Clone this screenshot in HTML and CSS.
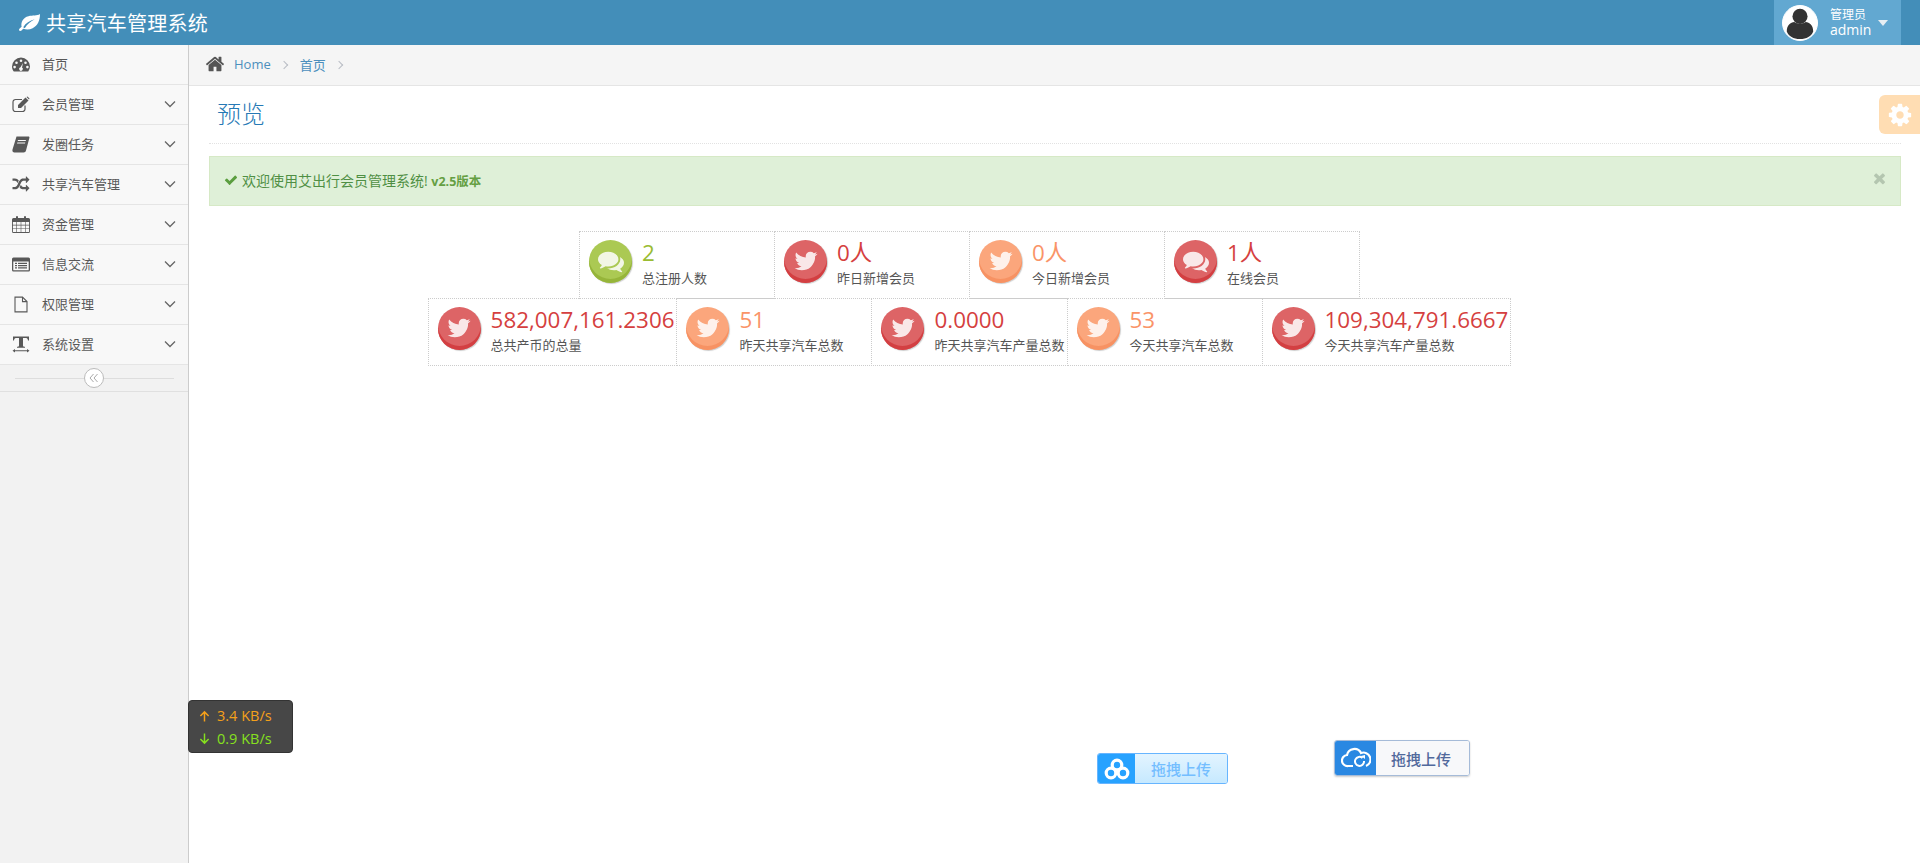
FILE: index.html
```html
<!DOCTYPE html>
<html lang="zh-CN">
<head>
<meta charset="utf-8">
<title>共享汽车管理系统</title>
<link rel="stylesheet" href="styles.css">
</head>
<body>
<svg class="sprites" aria-hidden="true">
  <symbol id="i-twitter" viewBox="0 0 1792 1792"><path d="M1684 408q-67 98-162 167 1 14 1 42 0 130-38 259.500t-115.500 248.500-184.500 210.500-258 146-323 54.500q-271 0-496-145 35 4 78 4 225 0 401-138-105-2-188-64.500t-114-159.500q33 5 61 5 43 0 85-11-112-23-185.500-111.500t-73.500-205.500v-4q68 38 146 41-66-44-105-115t-39-154q0-88 44-163 121 149 294.500 238.500t371.500 99.500q-8-38-8-74 0-134 94.500-228.500t228.500-94.500q140 0 236 102 109-21 200-76-35 109-138 165 90-10 180-49z"/></symbol>
  <symbol id="i-comments" viewBox="0 0 1792 1792"><path d="M1408 768q0 139-94 257t-256.500 186.500-353.500 68.500q-86 0-176-16-124 88-278 128-36 9-86 16h-3q-11 0-20.500-8t-11.500-21q-1-3-1-6.500t.5-6.500 2-6l2.500-5 3.500-5.500 4-5 4.500-5 4-4.500q5-6 23-25t26-29.500 22.500-29 25-38.500 20.500-44q-124-72-195-177t-71-224q0-139 94-257t256.500-186.500 353.500-68.500 353.500 68.500 256.500 186.500 94 257zm384 256q0 120-71 224.500t-195 176.500q10 24 20.500 44t25 38.500 22.500 29 26 29.500 23 25q1 1 4 4.500t4.500 5 4 5 3.500 5.500l2.500 5 2 6 .5 6.500-1 6.500q-3 14-13 22t-22 7q-50-7-86-16-154-40-278-128-90 16-176 16-271 0-472-132 58 4 88 4 161 0 309-45t264-129q125-92 192-212t67-254q0-77-23-152 129 71 204 178t75 230z"/></symbol>
  <symbol id="i-down" viewBox="0 0 14 14"><path d="M2 4.500l5 5 5-5" fill="none" stroke="currentColor" stroke-width="1.300"/></symbol>
</svg>

<header class="navbar">
  <div class="brand">
    <svg class="brand-leaf" viewBox="0 0 20 16"><path fill-rule="evenodd" d="M20 0c0 6-2 11-7 13.500-3 1.500-6 1.500-9 .5-1 1-1.500 2-3 2-.6 0-1-.5-1-1 0-1.500 1.500-2 2.500-3C1.500 8 4 3 9 2c4-1 8 0 11-2zM4 12.500c2.500-4 6-6 11-7.500-4 2-7 4.500-9.500 8.500z"/></svg>
    <span class="brand-text">共享汽车管理系统</span>
  </div>
  <div class="user">
    <span class="avatar"><svg viewBox="0 0 36 36"><circle cx="18" cy="11" r="8"/><path d="M4 27c0-7 4-9.500 8-10 3 2.500 9 2.500 12 0 4 .5 8 3 8 10-2 5-7 8-14 8S6 32 4 27z"/></svg></span>
    <span class="user-text"><small>管理员</small><span>admin</span></span>
    <span class="caret"></span>
  </div>
</header>

<div class="layout">
  <aside class="sidebar">
    <ul class="menu">
      <li class="menu-item">
        <svg class="mi" viewBox="0 0 18 16"><path fill-rule="evenodd" d="M9 1a9 9 0 0 0-9 9c0 2 .7 3.800 1.800 5h14.400A8.800 8.800 0 0 0 18 10a9 9 0 0 0-9-9zM9 3a1.300 1.300 0 1 1 0 2.600A1.300 1.300 0 0 1 9 3zM4.500 5a1.300 1.300 0 1 1 0 2.600 1.300 1.300 0 0 1 0-2.600zM13.500 5a1.300 1.300 0 1 1 0 2.600 1.300 1.300 0 0 1 0-2.600zM2.600 9.300a1.300 1.300 0 1 1 0 2.600 1.300 1.300 0 0 1 0-2.600zM15.400 9.300a1.300 1.300 0 1 1 0 2.600 1.300 1.300 0 0 1 0-2.600zM11 6.500l-1 4.500a1.800 1.800 0 1 1-1.500-.2z"/></svg>
        <span class="label">首页</span>
      </li>
      <li class="menu-item">
        <svg class="mi" viewBox="0 0 18 16"><path fill="none" stroke="currentColor" stroke-width="1.200" d="M10 3H3.500A2.500 2.500 0 0 0 1 5.500v7A2.500 2.500 0 0 0 3.500 15h7a2.500 2.500 0 0 0 2.500-2.500V9"/><path d="M6 8.500L13.500 1l3 3L9 11.500H6zM14.500.5l1-.5 2 2-.5 1z"/></svg>
        <span class="label">会员管理</span>
        <svg class="arrow"><use href="#i-down"/></svg>
      </li>
      <li class="menu-item">
        <svg class="mi" viewBox="0 0 18 16"><path fill-rule="evenodd" d="M4.500 0H17l.5 1-3.500 13c-.3 1-1 2-2.500 2H2.500C1 16 0 15 .5 13zM6 3.500l-.3 1h8l.3-1zM5.300 6l-.3 1h8l.3-1z"/></svg>
        <span class="label">发圈任务</span>
        <svg class="arrow"><use href="#i-down"/></svg>
      </li>
      <li class="menu-item">
        <svg class="mi" viewBox="0 0 1792 1792"><path d="M666 481q-60 92-137 273-22-45-37-72.500t-40.500-63.500-51-56.500-63-35-81.500-14.500h-224q-14 0-23-9t-9-23v-192q0-14 9-23t23-9h224q250 0 410 225zm1126 799q0 14-9 23l-320 320q-9 9-23 9-13 0-22.500-9.500t-9.500-22.500v-192q-32 0-85 .5t-81 1-73-1-71-5-64-10.500-63-18.500-58-28.500-59-40-55-53.500-56-69.500q59-93 136-273 22 45 37 72.500t40.500 63.500 51 56.500 63 35 81.500 14.500h256v-192q0-14 9-23t23-9q12 0 24 10l319 319q9 9 9 23zm0-896q0 14-9 23l-320 320q-9 9-23 9-13 0-22.500-9.500t-9.500-22.500v-192h-256q-48 0-87 15t-69 45-51 61.500-45 77.500q-32 62-78 171-29 66-49.500 111t-54 105-64 100-74 83-90 68.500-106.500 42-128 16.500h-224q-14 0-23-9t-9-23v-192q0-14 9-23t23-9h224q48 0 87-15t69-45 51-61.500 45-77.500q32-62 78-171 29-66 49.500-111t54-105 64-100 74-83 90-68.500 106.500-42 128-16.500h256v-192q0-14 9-23t23-9q12 0 24 10l319 319q9 9 9 23z"/></svg>
        <span class="label">共享汽车管理</span>
        <svg class="arrow"><use href="#i-down"/></svg>
      </li>
      <li class="menu-item">
        <svg class="mi" viewBox="0 0 18 17"><path fill-rule="evenodd" d="M1.500 2H4V1a1 1 0 0 1 2 0v1h6V1a1 1 0 0 1 2 0v1h2.500A1.500 1.500 0 0 1 18 3.500v12a1.500 1.500 0 0 1-1.500 1.500h-15A1.500 1.500 0 0 1 0 15.500v-12A1.500 1.500 0 0 1 1.500 2zM.9 6v2.800h3.500V6zM5 6v2.800h3.700V6zM9.300 6v2.800H13V6zM13.600 6v2.800h3.500V6zM.9 9.400v2.600h3.500V9.400zM5 9.400v2.600h3.700V9.400zM9.300 9.400v2.600H13V9.400zM13.600 9.400v2.600h3.500V9.400zM.9 12.600v3.500h3.500v-3.500zM5 12.600v3.500h3.700v-3.500zM9.300 12.600v3.500H13v-3.500zM13.600 12.600v3.500h3.500v-3.500z"/></svg>
        <span class="label">资金管理</span>
        <svg class="arrow"><use href="#i-down"/></svg>
      </li>
      <li class="menu-item">
        <svg class="mi" viewBox="0 0 18 14"><path fill-rule="evenodd" d="M1.500 0h15A1.500 1.500 0 0 1 18 1.500v11a1.500 1.500 0 0 1-1.500 1.500h-15A1.500 1.500 0 0 1 0 12.500v-11A1.500 1.500 0 0 1 1.500 0zM1.300 4v8.400c0 .2.100.3.300.3h14.800c.2 0 .3-.1.300-.3V4zM3 5.300h2v1.200H3zM6 5.300h9v1.200H6zM3 7.500h2v1.200H3zM6 7.500h9v1.200H6zM3 9.700h2v1.200H3zM6 9.700h9v1.200H6z"/></svg>
        <span class="label">信息交流</span>
        <svg class="arrow"><use href="#i-down"/></svg>
      </li>
      <li class="menu-item">
        <svg class="mi mi-file" viewBox="0 0 14 16"><path fill="none" stroke="currentColor" stroke-width="1.100" d="M1 .6h7.500l4.500 4.500v10.300H1zM8.500.6v4.500H13"/></svg>
        <span class="label">权限管理</span>
        <svg class="arrow"><use href="#i-down"/></svg>
      </li>
      <li class="menu-item">
        <svg class="mi" viewBox="0 0 18 16"><path d="M1 0h16v4h-1c-.2-1.500-.6-2.500-2-2.500h-3V9c0 1 .5 1.200 2 1.200v1H5v-1c1.500 0 2-.2 2-1.200V1.500H4C2.600 1.500 2.200 2.500 2 4H1zM3 12.500v1.200h12v-1.200l2.500 1.800-2.500 1.700v-1.200H3V16L.5 14.300z"/></svg>
        <span class="label">系统设置</span>
        <svg class="arrow"><use href="#i-down"/></svg>
      </li>
    </ul>
    <div class="collapse"><span class="collapse-btn"><svg viewBox="0 0 10 10"><path fill="none" stroke="currentColor" d="M4.500 1L1 5l3.500 4M8.500 1L5 5l3.500 4"/></svg></span></div>
  </aside>

  <main class="main">
    <nav class="crumbs">
      <svg class="home" viewBox="0 0 1792 1792"><path d="M1472 992v480q0 26-19 45t-45 19h-384v-384h-256v384h-384q-26 0-45-19t-19-45v-480q0-1 .5-3t.5-3l575-474 575 474q1 2 1 6zm223-69l-62 74q-8 9-21 11h-3q-13 0-21-7l-692-577-692 577q-12 8-24 7-13-2-21-11l-62-74q-8-10-7-23.500t11-21.500l719-599q32-26 76-26t76 26l244 204v-195q0-14 9-23t23-9h192q14 0 23 9t9 23v408l219 182q10 8 11 21.500t-7 23.500z"/></svg>
      <a class="crumb">Home</a><span class="sep"></span><a class="crumb">首页</a><span class="sep"></span>
    </nav>
    <section class="content">
      <div class="settings"><svg viewBox="0 0 1792 1792"><path d="M1152 896q0-106-75-181t-181-75-181 75-75 181 75 181 181 75 181-75 75-181zm512-109v222q0 12-8 23t-20 13l-185 28q-19 54-39 91 35 50 107 138 10 12 10 25t-9 23q-27 37-99 108t-94 71q-12 0-26-9l-138-108q-44 23-91 38-16 136-29 186-7 28-36 28h-222q-14 0-24.500-8.500t-11.500-21.500l-28-184q-49-16-90-37l-141 107q-10 9-25 9-14 0-25-11-126-114-165-168-7-10-7-23 0-12 8-23 15-21 51-66.500t54-70.500q-27-50-41-99l-183-27q-13-2-21-12.500t-8-23.500v-222q0-12 8-23t19-13l186-28q14-46 39-92-40-57-107-138-10-12-10-24 0-10 9-23 26-36 98.500-107.500t94.500-71.500q13 0 26 10l138 107q44-23 91-38 16-136 29-186 7-28 36-28h222q14 0 24.500 8.500t11.500 21.500l28 184q49 16 90 37l142-107q9-9 24-9 13 0 25 10 129 119 165 170 7 8 7 22 0 12-8 23-15 21-51 66.500t-54 70.500q26 50 41 98l183 28q13 2 21 12.500t8 23.500z"/></svg></div>
      <h1 class="title">预览</h1>
      <div class="alert">
        <svg class="check" viewBox="0 0 1792 1792"><path d="M1671 566q0 40-28 68l-724 724-136 136q-28 28-68 28t-68-28l-136-136-362-362q-28-28-28-68t28-68l136-136q28-28 68-28t68 28l294 295 656-657q28-28 68-28t68 28l136 136q28 28 28 68z"/></svg>
        <span class="alert-text">欢迎使用艾出行会员管理系统! <b>v2.5版本</b></span>
        <svg class="close" viewBox="0 0 1408 1408"><path d="M1298 1104q0 40-28 68l-136 136q-28 28-68 28t-68-28L704 1014l-294 294q-28 28-68 28t-68-28l-136-136q-28-28-28-68t28-68l294-294-294-294q-28-28-28-68t28-68l136-136q28-28 68-28t68 28l294 294 294-294q28-28 68-28t68 28l136 136q28 28 28 68t-28 68L976 736l294 294q28 28 28 68z"/></svg>
      </div>
      <div class="stats">
        <div class="stat-row">
          <div class="stat"><span class="coin green"><svg><use href="#i-comments"/></svg></span><div class="data"><span class="num t-green">2</span><span class="cap">总注册人数</span></div></div>
          <div class="stat"><span class="coin red"><svg><use href="#i-twitter"/></svg></span><div class="data"><span class="num t-red">0人</span><span class="cap">昨日新增会员</span></div></div>
          <div class="stat"><span class="coin orange"><svg><use href="#i-twitter"/></svg></span><div class="data"><span class="num t-orange">0人</span><span class="cap">今日新增会员</span></div></div>
          <div class="stat"><span class="coin red"><svg><use href="#i-comments"/></svg></span><div class="data"><span class="num t-red">1人</span><span class="cap">在线会员</span></div></div>
        </div>
        <div class="stat-row">
          <div class="stat"><span class="coin red"><svg><use href="#i-twitter"/></svg></span><div class="data"><span class="num t-red">582,007,161.2306</span><span class="cap">总共产币的总量</span></div></div>
          <div class="stat"><span class="coin orange"><svg><use href="#i-twitter"/></svg></span><div class="data"><span class="num t-orange">51</span><span class="cap">昨天共享汽车总数</span></div></div>
          <div class="stat"><span class="coin red"><svg><use href="#i-twitter"/></svg></span><div class="data"><span class="num t-red">0.0000</span><span class="cap">昨天共享汽车产量总数</span></div></div>
          <div class="stat"><span class="coin orange"><svg><use href="#i-twitter"/></svg></span><div class="data"><span class="num t-orange">53</span><span class="cap">今天共享汽车总数</span></div></div>
          <div class="stat"><span class="coin red"><svg><use href="#i-twitter"/></svg></span><div class="data"><span class="num t-red">109,304,791.6667</span><span class="cap">今天共享汽车产量总数</span></div></div>
        </div>
      </div>
    </section>
  </main>
</div>

<div class="speed">
  <div class="speed-line up"><svg class="speed-arrow" viewBox="0 0 12 12"><path fill="none" stroke="currentColor" stroke-width="1.600" d="M6 12V1.500M1.500 6L6 1.500 10.500 6"/></svg>3.4 KB/s</div>
  <div class="speed-line down"><svg class="speed-arrow" viewBox="0 0 12 12"><path fill="none" stroke="currentColor" stroke-width="1.600" d="M6 0v10.500M1.500 6L6 10.500 10.500 6"/></svg>0.9 KB/s</div>
</div>

<div class="drag drag-baidu">
  <span class="drag-icon"><svg viewBox="0 0 26 22"><g fill="none" stroke="#fff" stroke-width="3.200"><circle cx="13" cy="7" r="4.800"/><circle cx="7" cy="15" r="4.800"/><circle cx="19" cy="15" r="4.800"/></g></svg></span>
  <span class="drag-text">拖拽上传</span>
</div>
<div class="drag drag-cloud">
  <span class="drag-icon"><svg viewBox="0 0 30 22"><path fill="none" stroke="#fff" stroke-width="2.200" d="M12 19H7A5.500 5.500 0 0 1 6 8a7.500 7.500 0 0 1 14-2 6.500 6.500 0 0 1 5 13"/><path fill="none" stroke="#fff" stroke-width="2" d="M23 14a4.500 4.500 0 1 1-1.500-3"/><path fill="#fff" d="M20 9l4-1v4z"/></svg></span>
  <span class="drag-text">拖拽上传</span>
</div>
</body>
</html>
```
FILE: styles.css
```css
* { box-sizing: border-box; }
html, body { margin: 0; height: 100%; }
body {
  font-family: "Open Sans", "Noto Sans CJK SC", sans-serif;
  font-size: 13px;
  color: #393939;
  background: #fff;
  overflow: hidden;
  position: relative;
}
.sprites { display: none; }

.navbar {
  height: 45px;
  background: #438eb9;
  display: flex;
  justify-content: space-between;
  color: #fff;
}
.brand { display: flex; align-items: center; padding-left: 19px; font-size: 20px; }
.brand-text { letter-spacing: .25px; margin-top: -1px; }
.brand-leaf { width: 21px; height: 17px; fill: #fff; margin-right: 6px; }
.user {
  width: 127px;
  margin-right: 19px;
  background: #62a8d1;
  display: flex;
  align-items: center;
  padding-left: 8px;
}
.avatar {
  width: 36px; height: 36px;
  border-radius: 50%;
  background: #fff;
  border: 1px solid #fff;
  overflow: hidden;
  flex: none;
}
.avatar svg { width: 34px; height: 34px; fill: #333; display: block; }
.user-text { display: flex; flex-direction: column; margin-left: 12px; font-size: 14px; line-height: 16px; }
.user-text small { font-size: 12px; line-height: 15px; }
.caret {
  margin-left: 7px;
  border-left: 5px solid transparent;
  border-right: 5px solid transparent;
  border-top: 6px solid #e6eef3;
}

.layout { display: flex; height: 818px; }
.sidebar {
  width: 189px;
  flex: none;
  background: #f2f2f2;
  border-right: 1px solid #ccc;
}
.menu { list-style: none; margin: 0; padding: 0; }
.menu-item {
  height: 40px;
  display: flex;
  align-items: center;
  background: #f8f8f8;
  border-bottom: 1px solid #e5e5e5;
  color: #585858;
  padding-left: 12px;
  position: relative;
}
.mi { width: 18px; height: 17px; fill: #585858; color: #585858; flex: none; }
.mi-file { width: 14px; margin: 0 2px; }
.label { margin: -2px 0 0 12px; font-size: 13px; }
.arrow { position: absolute; left: 163px; top: 12px; width: 14px; height: 14px; color: #666; }
.collapse {
  height: 27px;
  border-bottom: 1px solid #e0e0e0;
  display: flex;
  align-items: center;
  justify-content: center;
  background: linear-gradient(#ddd, #ddd) center / 159px 1px no-repeat;
}
.collapse-btn {
  width: 20px; height: 20px;
  border: 1px solid #bbb;
  border-radius: 50%;
  background: #fff;
  color: #aaa;
  display: flex;
  align-items: center;
  justify-content: center;
}
.collapse-btn svg { width: 10px; height: 10px; }

.main { flex: 1; min-width: 0; }
.crumbs {
  height: 41px;
  background: #f5f5f5;
  border-bottom: 1px solid #e5e5e5;
  display: flex;
  align-items: center;
  padding: 0 0 2px 16px;
}
.home { width: 20px; height: 20px; fill: #555; margin-right: 9px; }
.crumb { color: #4c8fbd; font-size: 13px; }
.sep {
  width: 6px; height: 6px;
  border-top: 1.5px solid #b9bdc5;
  border-right: 1.5px solid #b9bdc5;
  transform: rotate(45deg);
  margin: 2px 13px 0 10px;
}

.content { padding: 0 19px 0 20px; position: relative; }
.settings {
  position: absolute;
  right: 0; top: 9px;
  width: 41px; height: 39px;
  background: #ffddb3;
  border-radius: 6px 0 0 6px;
  display: flex;
  align-items: center;
  justify-content: center;
}
.settings svg { width: 26px; height: 26px; fill: #fff; }
.title {
  margin: 0;
  height: 58px;
  padding: 8px 0 0 8px;
  font-size: 24px;
  font-weight: 300;
  line-height: 40px;
  color: #2679b5;
  border-bottom: 1px dotted #e2e2e2;
}
.alert {
  margin-top: 12px;
  height: 50px;
  background: #dff0d8;
  border: 1px solid #d6e9c6;
  color: #4f8f44;
  display: flex;
  align-items: center;
  padding: 0 14px 2px;
  position: relative;
}
.check { width: 14px; height: 14px; fill: #5b9e3f; margin-right: 4px; }
.alert-text { font-size: 14px; }
.alert-text b { font-size: 12.5px; color: #659f43; }
.close { position: absolute; right: 14px; top: 15px; width: 13px; height: 13px; fill: #b4c6b0; }

.stats { margin-top: 25px; padding-right: 170px; }
.stat-row { display: flex; justify-content: center; }
.stat {
  min-width: 196px;
  height: 68px;
  display: flex;
  align-items: flex-start;
  padding: 8px 2px 0 9px;
  border: 1px dotted #ccc;
  margin-left: -1px;
}
.stat-row + .stat-row .stat { margin-top: -1px; }
.coin {
  width: 43px; height: 43px;
  border-radius: 50%;
  display: flex;
  align-items: center;
  justify-content: center;
  flex: none;
}
.coin svg { width: 26px; height: 26px; fill: #fff; opacity: .85; margin-top: -2px; }
.green { background: #abc953; box-shadow: inset 0 -4px 0 #96b53a, 1px 1px 1px rgba(0,0,0,.2); }
.red { background: #dd6466; box-shadow: inset 0 -4px 0 #d33f42, 1px 1px 1px rgba(0,0,0,.2); }
.orange { background: #fba67c; box-shadow: inset 0 -4px 0 #f79263, 1px 1px 1px rgba(0,0,0,.2); }
.data { display: flex; flex-direction: column; margin: -2px 0 0 10px; }
.num { font-size: 22.4px; line-height: 30px; }
.cap { font-size: 13px; line-height: 20px; color: #555; }
.t-green { color: #9abc32; }
.t-red { color: #d53f40; }
.t-orange { color: #fa9468; }

.speed {
  position: absolute;
  left: 188px; top: 700px;
  width: 105px; height: 53px;
  background: #474747;
  border: 1px solid #333;
  border-radius: 4px;
  padding: 3px 0 0 10px;
  font-size: 14.5px;
  line-height: 23px;
}
.speed-line { display: flex; align-items: center; }
.speed-arrow { width: 11px; height: 12px; margin-right: 7px; }
.up { color: #f5a01a; }
.down { color: #86e01e; }

.drag { position: absolute; display: flex; align-items: center; font-weight: 500; border-radius: 3px; overflow: hidden; }
.drag-baidu {
  left: 1097px; top: 753px;
  width: 131px; height: 31px;
  border: 1px solid #67b5ff;
}
.drag-baidu .drag-icon { width: 37px; background: #27a2ff; }
.drag-baidu .drag-text { flex: 1; color: #74beff; background: linear-gradient(#e3f4ff, #c6e9ff); }
.drag-cloud {
  left: 1334px; top: 740px;
  width: 136px; height: 36px;
  border: 1px solid #a5bbd8;
  box-shadow: 0 1px 2px rgba(0,0,0,.2);
}
.drag-cloud .drag-icon { width: 41px; background: #2a88e2; }
.drag-cloud .drag-text { flex: 1; color: #51699c; background: #f7f8fa; padding-right: 3px; }
.drag-icon { height: 100%; display: flex; align-items: center; justify-content: center; }
.drag-icon svg { width: 30px; height: 22px; }
.drag-text { height: 100%; display: flex; align-items: center; justify-content: center; font-size: 15px; }
```
